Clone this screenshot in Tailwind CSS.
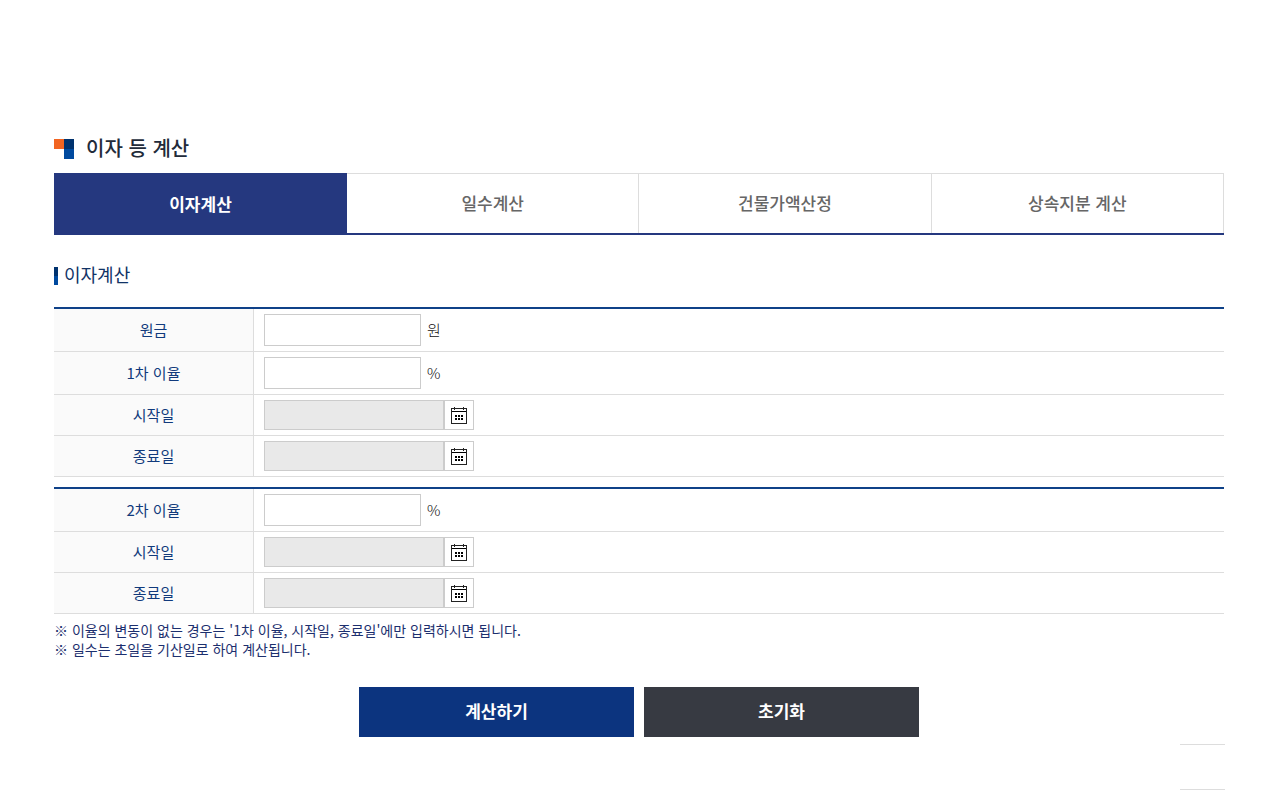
<!DOCTYPE html>
<html lang="ko">
<head>
<meta charset="utf-8">
<meta name="viewport" content="width=device-width, initial-scale=1">
<title>이자 등 계산</title>
<script src="https://cdn.jsdelivr.net/npm/@tailwindcss/browser@4"></script>
</head>
<body class="bg-white font-['Noto_Sans_CJK_KR','Noto_Sans',sans-serif] text-[#111]">
<svg class="hidden" aria-hidden="true">
  <symbol id="calendar" viewBox="0 -1 16 18">
    <g shape-rendering="crispEdges">
      <path d="M0 1h16v1H0zM0 2h1v14H0zM15 2h1v14h-1zM0 16h16v1H0zM3 0h1v3H3zM12 0h1v3h-1z" fill="#222"/>
      <path d="M1 4h14v1H1zM4 8h2v2H4zM7 8h2v2H7zM10 8h2v2h-2zM4 11h2v2H4zM7 11h2v2H7zM10 11h2v2h-2z" fill="#000"/>
    </g>
  </symbol>
</svg>
<main class="flex flex-col pt-[139px] pl-[54px] pr-[60px]">
  <h1 class="flex h-5 items-start gap-3 text-[20px] leading-[18px] font-medium text-[#222b3a]">
    <svg class="size-5" viewBox="0 0 20 20" aria-hidden="true" shape-rendering="crispEdges">
      <path d="M0 0h10v10H0z" fill="#f26522"/><path d="M10 0h10v10H10z" fill="#00326e"/><path d="M10 10h10v10H10z" fill="#004a9f"/>
    </svg>
    이자 등 계산
  </h1>

  <nav class="mt-3.5 flex h-[62px] border-b-2 border-[#25387f] text-[17px] font-medium text-[#666]">
    <a href="#interest" aria-current="page" class="-mb-0.5 flex min-w-[293px] flex-1 items-center justify-center bg-[#25387f] font-bold text-white">이자계산</a>
    <a href="#days" class="flex flex-1 items-center justify-center border-t border-r border-[#ddd] pb-0.5">일수계산</a>
    <a href="#building" class="flex flex-1 items-center justify-center border-t border-r border-[#ddd] pb-0.5">건물가액산정</a>
    <a href="#inherit" class="flex flex-1 items-center justify-center border-t border-r border-[#ddd] pb-0.5">상속지분 계산</a>
  </nav>

  <h2 class="mt-8 flex h-[18px] items-start gap-1.5 text-[18px] leading-[14px] text-[#113366]">
    <span class="flex h-[18px] w-1 flex-col"><span class="flex-1 bg-[#00326e]"></span><span class="flex-1 bg-[#004a9f]"></span></span>
    이자계산
  </h2>

  <form class="mt-[22px] flex flex-col">
    <table class="w-full table-fixed border-separate border-spacing-0 border-t-2 border-[#0f4188] text-[15px] leading-5">
      <colgroup><col class="w-[200px]"><col></colgroup>
      <tbody>
        <tr>
          <th scope="row" class="border-r border-b border-[#ddd] bg-[#fafafa] p-0 font-normal text-[#113a7c]"><label for="principal">원금</label></th>
          <td class="border-b border-[#ddd] px-2.5 py-[5px]"><div class="flex items-center gap-1.5 font-light"><input id="principal" type="text" class="h-8 w-[157px] border border-[#ccc] px-2">원</div></td>
        </tr>
        <tr>
          <th scope="row" class="border-r border-b border-[#ddd] bg-[#fafafa] p-0 font-normal text-[#113a7c]"><label for="rate1">1차 이율</label></th>
          <td class="border-b border-[#ddd] px-2.5 py-[5px]"><div class="flex items-center gap-1.5 font-light"><input id="rate1" type="text" class="h-8 w-[157px] border border-[#ccc] px-2">%</div></td>
        </tr>
        <tr>
          <th scope="row" class="border-r border-b border-[#ddd] bg-[#fafafa] p-0 font-normal text-[#113a7c]"><label for="start1">시작일</label></th>
          <td class="border-b border-[#ddd] px-2.5 py-[5px]"><div class="flex"><input id="start1" type="text" readonly class="h-[30px] w-[180px] border border-[#ccc] bg-[#e9e9e9] px-2"><button type="button" aria-label="시작일 선택" class="flex h-[30px] w-[30px] items-center justify-center border border-[#ccc] bg-white"><svg class="h-[18px] w-4"><use href="#calendar"/></svg></button></div></td>
        </tr>
        <tr>
          <th scope="row" class="border-r border-b border-[#ddd] bg-[#fafafa] p-0 font-normal text-[#113a7c]"><label for="end1">종료일</label></th>
          <td class="border-b border-[#ddd] px-2.5 py-[5px]"><div class="flex"><input id="end1" type="text" readonly class="h-[30px] w-[180px] border border-[#ccc] bg-[#e9e9e9] px-2"><button type="button" aria-label="종료일 선택" class="flex h-[30px] w-[30px] items-center justify-center border border-[#ccc] bg-white"><svg class="h-[18px] w-4"><use href="#calendar"/></svg></button></div></td>
        </tr>
      </tbody>
    </table>

    <table class="mt-2.5 w-full table-fixed border-separate border-spacing-0 border-t-2 border-[#0f4188] text-[15px] leading-5">
      <colgroup><col class="w-[200px]"><col></colgroup>
      <tbody>
        <tr>
          <th scope="row" class="border-r border-b border-[#ddd] bg-[#fafafa] p-0 font-normal text-[#113a7c]"><label for="rate2">2차 이율</label></th>
          <td class="border-b border-[#ddd] px-2.5 py-[5px]"><div class="flex items-center gap-1.5 font-light"><input id="rate2" type="text" class="h-8 w-[157px] border border-[#ccc] px-2">%</div></td>
        </tr>
        <tr>
          <th scope="row" class="border-r border-b border-[#ddd] bg-[#fafafa] p-0 font-normal text-[#113a7c]"><label for="start2">시작일</label></th>
          <td class="border-b border-[#ddd] px-2.5 py-[5px]"><div class="flex"><input id="start2" type="text" readonly class="h-[30px] w-[180px] border border-[#ccc] bg-[#e9e9e9] px-2"><button type="button" aria-label="시작일 선택" class="flex h-[30px] w-[30px] items-center justify-center border border-[#ccc] bg-white"><svg class="h-[18px] w-4"><use href="#calendar"/></svg></button></div></td>
        </tr>
        <tr>
          <th scope="row" class="border-r border-b border-[#ddd] bg-[#fafafa] p-0 font-normal text-[#113a7c]"><label for="end2">종료일</label></th>
          <td class="border-b border-[#ddd] px-2.5 py-[5px]"><div class="flex"><input id="end2" type="text" readonly class="h-[30px] w-[180px] border border-[#ccc] bg-[#e9e9e9] px-2"><button type="button" aria-label="종료일 선택" class="flex h-[30px] w-[30px] items-center justify-center border border-[#ccc] bg-white"><svg class="h-[18px] w-4"><use href="#calendar"/></svg></button></div></td>
        </tr>
      </tbody>
    </table>

    <div class="mt-[7px] text-[14px] leading-[19px] text-[#1c2f6e]">
      <p>※ 이율의 변동이 없는 경우는 '1차 이율, 시작일, 종료일'에만 입력하시면 됩니다.</p>
      <p>※ 일수는 초일을 기산일로 하여 계산됩니다.</p>
    </div>

    <div class="mt-7 flex justify-center gap-2.5 text-[17px] font-bold text-white">
      <button type="submit" class="h-[50px] w-[275px] bg-[#0c347f] pb-0.5">계산하기</button>
      <button type="reset" class="h-[50px] w-[275px] bg-[#373a42] pb-0.5">초기화</button>
    </div>
  </form>

  <div class="mt-[7px] -mr-px h-[46px] w-[45px] self-end border-y border-[#ddd]"></div>
</main>
</body>
</html>
